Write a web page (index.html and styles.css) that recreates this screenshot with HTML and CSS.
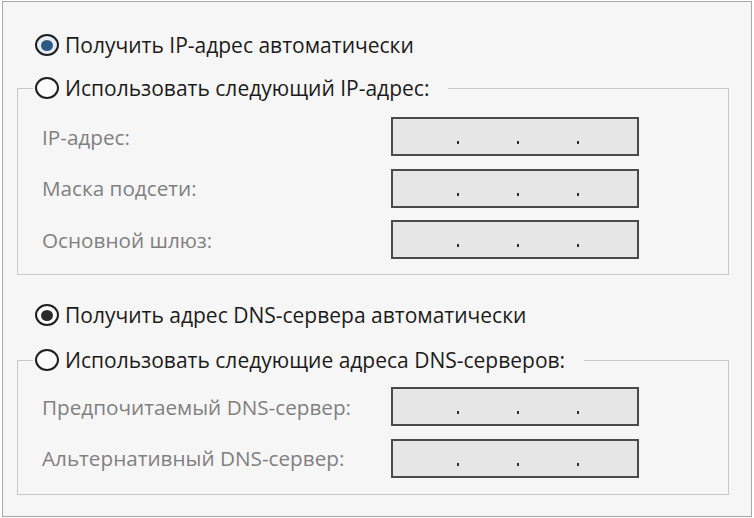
FILE: index.html
```html
<!DOCTYPE html>
<html lang="ru">
<head>
<meta charset="utf-8">
<title>Свойства IPv4</title>
<link rel="stylesheet" href="styles.css">
</head>
<body>
<div class="frame">
  <label class="radio radio-top">
    <span class="circle checked-blue"><span class="dot-in"></span></span>
    <span class="radio-text">Получить IP-адрес автоматически</span>
  </label>
  <fieldset class="group group-ip">
    <legend class="legend">
      <span class="radio">
        <span class="circle"></span>
        <span class="radio-text">Использовать следующий IP-адрес:</span>
      </span>
    </legend>
    <div class="rows">
      <span class="field-label">IP-адрес:</span>
      <div class="ip"><span class="pt"></span><span class="pt"></span><span class="pt"></span></div>
      <span class="field-label">Маска подсети:</span>
      <div class="ip"><span class="pt"></span><span class="pt"></span><span class="pt"></span></div>
      <span class="field-label">Основной шлюз:</span>
      <div class="ip"><span class="pt"></span><span class="pt"></span><span class="pt"></span></div>
    </div>
  </fieldset>

  <label class="radio radio-dns">
    <span class="circle checked-dark"><span class="dot-in"></span></span>
    <span class="radio-text">Получить адрес DNS-сервера автоматически</span>
  </label>
  <fieldset class="group group-dns">
    <legend class="legend">
      <span class="radio">
        <span class="circle"></span>
        <span class="radio-text">Использовать следующие адреса DNS-серверов:</span>
      </span>
    </legend>
    <div class="rows">
      <span class="field-label">Предпочитаемый DNS-сервер:</span>
      <div class="ip"><span class="pt"></span><span class="pt"></span><span class="pt"></span></div>
      <span class="field-label">Альтернативный DNS-сервер:</span>
      <div class="ip"><span class="pt"></span><span class="pt"></span><span class="pt"></span></div>
    </div>
  </fieldset>
</div>
</body>
</html>
```

FILE: styles.css
```css
* { box-sizing: border-box; }

html, body {
  margin: 0;
  padding: 0;
  background: #ffffff;
}

body {
  font-family: "Open Sans", "Noto Sans", "DejaVu Sans", sans-serif;
  font-size: 21px;
  color: #1b1b1b;
}

.frame {
  margin: 1px 2px 0 2px;
  width: 750px;
  height: 516px;
  border: 1px solid #a8a8a8;
  background: #f7f6f6;
  padding: 28px 0 0 0;
  display: flex;
  flex-direction: column;
  align-items: flex-start;
}

.radio {
  display: flex;
  align-items: center;
  height: 30px;
  gap: 6px;
  white-space: nowrap;
}

.radio-top,
.radio-dns {
  margin-left: 32px;
}

.radio-dns {
  margin-top: 25px;
}

.circle {
  width: 24px;
  height: 22px;
  border: 2px solid #1e1e1e;
  border-radius: 50%;
  background: #fbfbfb;
  display: flex;
  align-items: center;
  justify-content: center;
  flex: none;
}

.checked-blue {
  background: #e6edf3;
}

.checked-blue .dot-in {
  width: 12px;
  height: 11px;
  border-radius: 50%;
  background: #2e5a82;
}

.checked-dark .dot-in {
  width: 12px;
  height: 11px;
  border-radius: 50%;
  background: #2a2a2a;
}

.radio-text {
  line-height: 30px;
}

.group {
  margin: 13px 22px 0 14px;
  width: 712px;
  border: 1px solid #c9c9c9;
  padding: 14px 0 15px 15px;
  min-inline-size: 0;
}

.group-dns {
  margin-top: 15px;
  padding-top: 12px;
  padding-bottom: 16px;
}

.legend {
  padding: 0 19px 0 2px;
}

.rows {
  display: grid;
  grid-template-columns: 349px 248px;
  grid-auto-rows: 39px;
  row-gap: 12.5px;
  align-items: center;
  margin-left: 9px;
}

.field-label {
  color: #808080;
  font-size: 20.7px;
  white-space: nowrap;
}

.ip {
  height: 39px;
  border: 2px solid #4a4a4a;
  background: #e6e6e6;
  display: flex;
  align-items: flex-end;
  padding: 0 0 10px 64px;
  gap: 58px;
}

.pt {
  width: 2px;
  height: 3px;
  background: #2e2e2e;
}
```
